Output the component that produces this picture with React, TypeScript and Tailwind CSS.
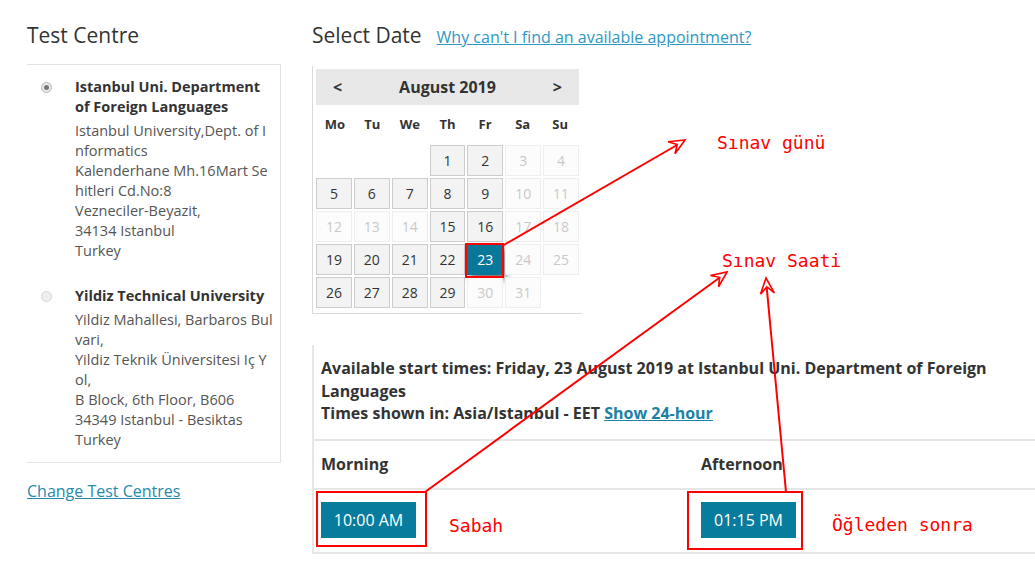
import React from "react";

type Day = { n?: number; state?: "on" | "off" | "sel" };

const weeks: Day[][] = [
  [{}, {}, {}, { n: 1, state: "on" }, { n: 2, state: "on" }, { n: 3, state: "off" }, { n: 4, state: "off" }],
  [
    { n: 5, state: "on" },
    { n: 6, state: "on" },
    { n: 7, state: "on" },
    { n: 8, state: "on" },
    { n: 9, state: "on" },
    { n: 10, state: "off" },
    { n: 11, state: "off" },
  ],
  [
    { n: 12, state: "off" },
    { n: 13, state: "off" },
    { n: 14, state: "off" },
    { n: 15, state: "on" },
    { n: 16, state: "on" },
    { n: 17, state: "off" },
    { n: 18, state: "off" },
  ],
  [
    { n: 19, state: "on" },
    { n: 20, state: "on" },
    { n: 21, state: "on" },
    { n: 22, state: "on" },
    { n: 23, state: "sel" },
    { n: 24, state: "off" },
    { n: 25, state: "off" },
  ],
  [
    { n: 26, state: "on" },
    { n: 27, state: "on" },
    { n: 28, state: "on" },
    { n: 29, state: "on" },
    { n: 30, state: "off" },
    { n: 31, state: "off" },
    {},
  ],
];

const dayNames = ["Mo", "Tu", "We", "Th", "Fr", "Sa", "Su"];

function Radio({ checked }: { checked?: boolean }) {
  return (
    <span
      className={
        "mt-[5px] flex h-[11px] w-[11px] shrink-0 items-center justify-center rounded-full border " +
        (checked ? "border-[#b5b5b5] bg-[#e9e9e9]" : "border-[#d6d6d6] bg-[#eeeeee]")
      }
    >
      {checked && <span className="h-[5px] w-[5px] rounded-full bg-[#777]" />}
    </span>
  );
}

function Centre({ name, lines, checked }: { name: string[]; lines: string[]; checked?: boolean }) {
  return (
    <div className="flex gap-[23px] pl-[14px]">
      <Radio checked={checked} />
      <div>
        <div className="text-[14.5px] font-bold leading-[20px] text-[#333]">
          {name.map((l) => (
            <div key={l}>{l}</div>
          ))}
        </div>
        <div className="mt-[4px] text-[14.5px] leading-[20px] text-[#555]">
          {lines.map((l) => (
            <div key={l}>{l}</div>
          ))}
        </div>
      </div>
    </div>
  );
}

function Cell({ d }: { d: Day }) {
  if (!d.n) return <div />;
  const cls =
    d.state === "sel"
      ? "bg-[#08789a] text-white shadow-[3px_4px_7px_rgba(0,0,0,0.6)]"
      : d.state === "on"
        ? "border border-[#cdcdcd] bg-[#f3f3f3] text-[#333]"
        : "border border-[#eeeeee] bg-[#fcfcfc] text-[#c9c9c9]";
  return <div className={"flex h-[31px] items-center justify-center text-[14px] " + cls}>{d.n}</div>;
}

// open arrowhead drawn as a thin outlined dart
function Head({ x, y, fx, fy }: { x: number; y: number; fx: number; fy: number }) {
  const a = Math.atan2(y - fy, x - fx);
  const len = 17;
  const spread = 0.42;
  const p1 = [x - len * Math.cos(a - spread), y - len * Math.sin(a - spread)];
  const p2 = [x - len * Math.cos(a + spread), y - len * Math.sin(a + spread)];
  const m = [x - 9 * Math.cos(a), y - 9 * Math.sin(a)];
  return (
    <path
      d={`M${x} ${y} L${p1[0]} ${p1[1]} L${m[0]} ${m[1]} L${p2[0]} ${p2[1]} Z`}
      fill="white"
      stroke="#ff0000"
      strokeWidth={1.6}
      strokeLinejoin="miter"
    />
  );
}

export default function App() {
  return (
    <div
      className="relative h-[579px] w-[1035px] overflow-hidden bg-white text-[#333]"
      style={{ fontFamily: '"Open Sans", "Noto Sans", sans-serif' }}
    >
      <div className="flex pl-[27px]">
        {/* test centre column */}
        <div className="w-[254px] shrink-0 pt-[21px]">
          <h2 className="text-[21px] leading-[28px] text-[#333]">Test Centre</h2>
          <div className="mt-[15px] border-t border-r border-b border-[#e2e2e2] pt-[12px] pb-[12px]">
            <Centre
              checked
              name={["Istanbul Uni. Department", "of Foreign Languages"]}
              lines={[
                "Istanbul University,Dept. of I",
                "nformatics",
                "Kalenderhane Mh.16Mart Se",
                "hitleri Cd.No:8",
                "Vezneciler-Beyazit,",
                "34134 Istanbul",
                "Turkey",
              ]}
            />
            <div className="h-[25px]" />
            <Centre
              name={["Yildiz Technical University"]}
              lines={[
                "Yildiz Mahallesi, Barbaros Bul",
                "vari,",
                "Yildiz Teknik Üniversitesi Iç Y",
                "ol,",
                "B Block, 6th Floor, B606",
                "34349 Istanbul - Besiktas",
                "Turkey",
              ]}
            />
          </div>
          <a className="mt-[18px] block text-[16px] leading-[20px] text-[#2789ae] underline">Change Test Centres</a>
        </div>

        {/* date + times column */}
        <div className="ml-[31px] flex-1">
          <div className="flex items-baseline gap-[15px] pt-[21px]">
            <h2 className="text-[21px] leading-[28px] text-[#333]">Select Date</h2>
            <a className="text-[16px] text-[#2f98c5] underline">Why can't I find an available appointment?</a>
          </div>

          <div className="mt-[17px] w-[270px] border-b border-l border-[#dadada] pt-[3px] pb-[5px] pl-[3px]">
            <div className="flex h-[36px] w-[263px] items-center justify-between bg-[#e8e8e8] px-[17px] text-[16px] font-bold">
              <span>&lt;</span>
              <span>August 2019</span>
              <span>&gt;</span>
            </div>
            <div className="grid h-[40px] w-[263px] grid-cols-7 items-center text-center text-[13px] font-bold">
              {dayNames.map((d) => (
                <span key={d}>{d}</span>
              ))}
            </div>
            <div className="grid w-[263px] grid-cols-7 gap-[2px]">
              {weeks.flat().map((d, i) => (
                <Cell key={i} d={d} />
              ))}
            </div>
          </div>

          <div className="mt-[31px] border-l-2 border-[#e6e6e6]">
            <div className="px-[7px] pt-[12px] pb-[14px] text-[16px] font-bold leading-[22.5px]">
              <div>Available start times: Friday, 23 August 2019 at Istanbul Uni. Department of Foreign</div>
              <div>Languages</div>
              <div>
                Times shown in: Asia/Istanbul - EET <a className="text-[#1b82a6] underline">Show 24-hour</a>
              </div>
            </div>
            <div className="flex h-[51px] items-center border-y-2 border-[#e6e6e6] text-[16px] font-bold">
              <div className="w-[387px] pl-[7px]">Morning</div>
              <div>Afternoon</div>
            </div>
            <div className="flex border-b-2 border-[#e6e6e6] pt-[12px] pb-[14px]">
              <div className="w-[387px] pl-[7px]">
                <button className="h-[36px] w-[95px] bg-[#077c9c] text-[16px] text-white">10:00 AM</button>
              </div>
              <div>
                <button className="h-[36px] w-[95px] bg-[#077c9c] text-[16px] text-white">01:15 PM</button>
              </div>
            </div>
          </div>
        </div>
      </div>

      {/* red markup layer */}
      <svg className="pointer-events-none absolute inset-0" width={1035} height={579}>
        <g fill="none" stroke="#ff0000" strokeWidth={2}>
          <rect x={466} y={244} width={37} height={33} />
          <rect x={317} y={492} width={109} height={54} />
          <rect x={688} y={492} width={114} height={57} />
          <line x1={502} y1={246} x2={684} y2={141} />
          <line x1={425} y1={492} x2={726} y2={273} />
          <line x1={786} y1={492} x2={766} y2={280} />
        </g>
        <Head x={685} y={140} fx={502} fy={246} />
        <Head x={727} y={272} fx={425} fy={492} />
        <Head x={766} y={278} fx={786} fy={492} />
      </svg>
      <div
        className="pointer-events-none absolute inset-0 text-[18px] leading-[22px] text-[#ff0000]"
        style={{ fontFamily: '"DejaVu Sans Mono", monospace' }}
      >
        <span className="absolute left-[717px] top-[132px]">Sınav günü</span>
        <span className="absolute left-[722px] top-[250px]">Sınav Saati</span>
        <span className="absolute left-[449px] top-[515px]">Sabah</span>
        <span className="absolute left-[832px] top-[514px]">Öğleden sonra</span>
      </div>
    </div>
  );
}
